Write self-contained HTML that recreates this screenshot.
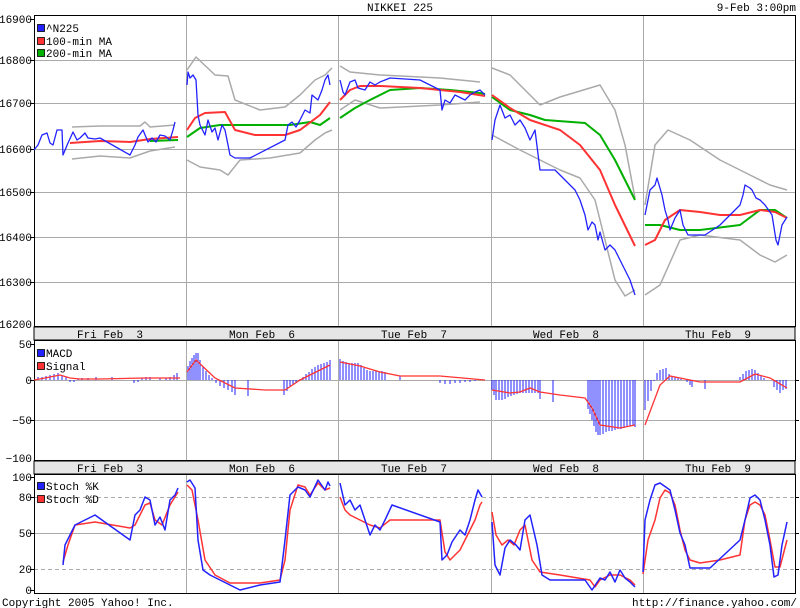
<!DOCTYPE html>
<html><head><meta charset="utf-8"><style>
html,body{margin:0;padding:0;background:#fff;}
svg{display:block;}
text{font-family:"Liberation Mono","DejaVu Sans Mono",monospace;font-size:11px;fill:#000;white-space:pre;}
</style></head><body>
<svg width="800" height="608" viewBox="0 0 800 608" xmlns="http://www.w3.org/2000/svg" xml:space="preserve">
<rect width="800" height="608" fill="#fff"/>
<text x="400" y="11" text-anchor="middle">NIKKEI 225</text>
<text x="796" y="11" text-anchor="end">9-Feb 3:00pm</text>

<g stroke="#aaa" stroke-width="1" fill="none">
<path d="M34 60.5H795M34 103.5H795M34 149.5H795M34 192.5H795M34 237.5H795M34 282.5H795"/>
<path d="M186.5 16V326M338.5 16V326M491.5 16V326M643.5 16V326"/>
<path d="M34 380.5H795M34 420.5H795M186.5 341V460M338.5 341V460M491.5 341V460M643.5 341V460"/>
<path d="M34 533.5H795M186.5 474V593M338.5 474V593M491.5 474V593M643.5 474V593"/>
<path d="M34 497.5H795M34 569.5H795" stroke-dasharray="4,3"/>
</g>
<rect x="34" y="327" width="761" height="13" fill="#e6e6e6" stroke="#000"/>
<rect x="34" y="461" width="761" height="13" fill="#e6e6e6" stroke="#000"/>
<g text-anchor="middle">
<text x="110" y="338">Fri Feb  3</text><text x="262" y="338">Mon Feb  6</text><text x="414" y="338">Tue Feb  7</text><text x="566" y="338">Wed Feb  8</text><text x="718" y="338">Thu Feb  9</text>
<text x="110" y="472">Fri Feb  3</text><text x="262" y="472">Mon Feb  6</text><text x="414" y="472">Tue Feb  7</text><text x="566" y="472">Wed Feb  8</text><text x="718" y="472">Thu Feb  9</text>
</g>
<g fill="none" stroke="#000">
<rect x="34.5" y="15.5" width="761" height="311"/>
<rect x="34.5" y="340.5" width="761" height="120"/>
<rect x="34.5" y="474.5" width="761" height="119"/>
</g>
<g text-anchor="end">
<text x="32" y="23">16900</text><text x="32" y="64">16800</text><text x="32" y="107">16700</text><text x="32" y="153">16600</text><text x="32" y="196">16500</text><text x="32" y="241">16400</text><text x="32" y="286">16300</text><text x="32" y="328">16200</text>
<text x="32" y="348">50</text><text x="32" y="384">0</text><text x="32" y="424">−50</text><text x="32" y="462">−100</text>
<text x="32" y="481">100</text><text x="32" y="501">80</text><text x="32" y="537">50</text><text x="32" y="573">20</text><text x="32" y="594">0</text>
</g>
<g stroke="#000"><path d="M30 19.5h4M30 60.5h4M30 103.5h4M30 149.5h4M30 192.5h4M30 237.5h4M30 282.5h4M30 344.5h4M30 380.5h4M30 420.5h4M30 477.5h4M30 497.5h4M30 533.5h4M30 569.5h4M30 590.5h4M795 380.5h4M795 420.5h4M795 497.5h4M795 533.5h4M795 569.5h4"/></g>

<g fill="none" stroke-width="1.5" stroke-linejoin="round">
<g stroke="#aaa">
<polyline points="72,127 100,126 140,126 145,122 150,127 175,125"/>
<polyline points="72,159 100,156 130,158 150,151 175,147"/>
<polyline points="187,70 196,57 215,75 228,76 235,100 260,110 285,107 300,95 315,80 325,75 332,68"/>
<polyline points="187,160 200,167 220,170 228,175 240,160 270,158 300,153 315,140 325,133 332,130"/>
<polyline points="340,66 350,72 380,75 440,78 480,82"/>
<polyline points="340,110 355,100 380,108 440,105 480,102"/>
<polyline points="492,68 510,75 525,90 540,105 560,97 600,85 615,110 625,145 635,198"/>
<polyline points="492,135 520,150 560,170 580,178 595,200 605,240 615,280 625,296 635,290"/>
<polyline points="645,205 655,145 668,130 690,140 720,160 740,170 770,185 787,190"/>
<polyline points="645,295 660,285 680,240 700,235 740,240 760,255 775,262 787,255"/>
</g>
<g stroke="#00b000" stroke-width="2">
<polyline points="150,141 178,140"/>
<polyline points="187,137 200,128 220,125 290,125 310,122 320,125 330,118"/>
<polyline points="340,118 355,108 370,100 390,90 420,88 450,90 480,93 485,94"/>
<polyline points="492,97 510,110 530,115 545,120 585,123 600,135 615,160 635,200"/>
<polyline points="645,225 660,225 680,230 700,230 740,225 760,210 775,210 787,218"/>
</g>
<g stroke="#f33" stroke-width="2">
<polyline points="70,143 100,141 130,142 150,139 178,137"/>
<polyline points="187,130 195,118 205,113 225,112 235,130 255,135 285,135 300,130 320,115 330,102"/>
<polyline points="340,100 350,90 360,86 380,86 420,88 440,90 460,92 485,96"/>
<polyline points="492,95 510,108 530,120 560,130 580,145 600,170 615,205 635,246"/>
<polyline points="645,245 655,240 665,220 680,210 700,212 720,215 740,215 760,210 775,212 787,218"/>
</g>
<g stroke="#22f" stroke-width="1.3">
<polyline points="34,150 38,145 42,135 47,133 50,143 53,145 57,130 62,130 63,155 68,143 73,132 77,140 80,138 85,133 88,138 95,139 100,138 130,155 135,145 138,137 143,130 148,142 152,138 156,142 160,135 165,136 170,140 173,130 175,122"/>
<polyline points="187,85 188,72 190,78 193,75 196,80 198,115 200,125 205,135 208,120 212,132 215,128 218,140 222,125 225,130 230,155 235,158 250,158 285,140 288,125 292,122 296,127 300,120 305,110 310,113 312,95 318,100 322,90 325,80 328,75 330,85"/>
<polyline points="340,80 343,92 345,95 350,82 355,80 358,88 365,90 370,82 375,85 380,82 385,80 390,78 420,80 440,90 442,110 445,100 450,103 455,95 465,100 470,95 475,92 480,90 485,95"/>
<polyline points="492,140 495,120 500,105 505,118 510,115 515,125 520,120 525,128 530,140 535,130 540,170 555,170 570,185 575,190 580,200 585,215 588,230 592,222 595,225 598,240 600,232 605,250 610,245 615,250 620,260 625,270 630,280 635,295"/>
<polyline points="645,215 648,200 650,190 655,185 657,178 662,195 665,210 668,220 670,230 675,218 680,210 683,225 688,235 705,235 720,225 740,205 743,195 745,185 750,188 752,190 756,198 760,200 765,205 772,215 776,240 778,245 781,230 782,225 787,217"/>
</g>
</g>

<g stroke="#22f" stroke-width="1">
<path d="M38 380V377M42 380V377M46 380V376M50 380V375M54 380V374M58 380V373M62 380V375M66 380V377M70 380V382M74 380V382M78 380V379M82 380V378M88 380V378M96 380V377M112 380V377M134 380V383M138 380V382M142 380V378M146 380V377M150 380V377M160 380V378M166 380V378M170 380V377M174 380V375M177 380V373"/>
<path d="M188 380V366M190 380V361M192 380V358M194 380V355M196 380V353M198 380V353M200 380V360M203 380V366M206 380V371M209 380V375M212 380V378M216 380V383M220 380V386M224 380V388M228 380V390M232 380V392M235 380V395M248 380V396M284 380V395M287 380V391M290 380V387M293 380V385M296 380V383M300 380V379M303 380V377M306 380V374M309 380V372M312 380V369M315 380V367M318 380V365M321 380V364M324 380V363M327 380V362M330 380V360"/>
<path d="M340 380V359M343 380V361M346 380V362M349 380V363M352 380V363M355 380V363M358 380V363M361 380V365M364 380V368M367 380V370M370 380V371M373 380V371M376 380V371M379 380V371M382 380V371M385 380V372M400 380V376M440 380V383M445 380V384M450 380V384M455 380V383M460 380V383M465 380V382M470 380V382M475 380V381M480 380V380"/>
<path d="M492 380V390M494 380V395M496 380V400M499 380V400M502 380V400M505 380V399M508 380V397M511 380V396M514 380V395M517 380V394M520 380V393M523 380V393M526 380V393M529 380V393M532 380V393M535 380V393M538 380V393M540 380V399M553 380V402M588 380V409M590 380V414M592 380V420M594 380V426M596 380V432M598 380V435M600 380V435M603 380V434M606 380V432M609 380V431M612 380V431M615 380V430M618 380V429M621 380V429M624 380V428M627 380V427M630 380V426M633 380V426M635 380V427"/>
<path d="M645 380V410M648 380V401M651 380V391M654 380V381M657 380V373M660 380V370M663 380V369M666 380V368M669 380V374M672 380V376M675 380V377M678 380V378M681 380V379M687 380V382M690 380V385M692 380V387M705 380V389M740 380V377M743 380V374M746 380V371M749 380V370M752 380V369M755 380V370M758 380V373M761 380V376M764 380V378M767 380V380M774 380V387M777 380V390M780 380V393M783 380V390M786 380V389"/>
</g>
<g fill="none" stroke="#f33" stroke-width="1.3">
<polyline points="34,380 45,378 55,376 60,375 70,378 80,379 100,379 145,378 180,378"/>
<polyline points="187,372 196,360 215,378 235,388 265,390 285,390 300,380 330,365"/>
<polyline points="340,362 360,366 380,372 400,376 440,376 485,380"/>
<polyline points="492,390 510,393 520,392 530,388 540,392 560,395 585,398 592,408 600,425 620,428 635,425"/>
<polyline points="645,425 660,385 670,376 690,380 700,382 740,382 755,374 770,378 787,388"/>
</g>

<g fill="none" stroke-width="1.5" stroke-linejoin="round">
<g stroke="#f33">
<polyline points="63,562 68,545 75,525 95,522 130,528 135,525 145,505 150,503 155,520 162,525 170,505 178,492"/>
<polyline points="187,485 192,490 198,520 205,560 215,575 230,583 260,583 280,580 285,560 290,510 298,485 305,487 310,495 318,483 325,490 330,488"/>
<polyline points="340,497 345,510 350,515 360,520 370,525 380,528 390,520 440,520 445,552 450,560 460,550 470,530 475,520 480,505 482,502"/>
<polyline points="492,512 496,535 502,545 508,540 514,545 520,530 525,525 532,560 540,572 560,575 590,580 595,587 600,580 610,575 620,575 630,580 635,585"/>
<polyline points="643,574 648,540 655,520 660,498 665,490 670,493 675,505 680,530 685,550 690,560 700,563 720,560 740,555 745,520 750,505 755,502 760,505 765,515 770,540 775,567 780,567 787,540"/>
</g>
<g stroke="#22f">
<polyline points="63,565 65,545 70,535 75,525 95,515 130,540 135,515 140,510 145,497 150,500 155,525 160,517 165,530 170,500 175,495 178,488"/>
<polyline points="187,482 190,480 195,488 198,540 203,570 210,575 240,590 260,585 280,582 285,540 290,495 298,487 305,490 310,497 318,480 325,490 328,482 330,486"/>
<polyline points="340,483 345,505 350,500 355,510 360,505 370,535 375,525 380,530 385,520 392,505 440,522 442,560 447,555 452,542 460,530 465,535 470,520 475,500 478,490 482,497"/>
<polyline points="492,522 495,565 500,575 505,548 510,540 516,545 520,550 525,520 530,515 537,545 542,575 550,580 585,580 592,590 600,578 605,580 610,572 615,582 620,570 625,578 630,582 635,587"/>
<polyline points="643,572 645,520 650,500 655,485 660,483 670,490 675,510 680,533 685,545 690,568 710,568 740,540 745,520 750,498 755,495 760,500 765,520 770,545 774,577 778,575 782,545 787,522"/>
</g>
</g>

<g stroke="#000" stroke-width="0.8">
<rect x="37.5" y="24.5" width="7" height="7" fill="#22f"/>
<rect x="37.5" y="37.5" width="7" height="7" fill="#f33"/>
<rect x="37.5" y="49.5" width="7" height="7" fill="#00b000"/>
<rect x="37.5" y="349.5" width="7" height="7" fill="#22f"/>
<rect x="37.5" y="362.5" width="7" height="7" fill="#f33"/>
<rect x="37.5" y="482.5" width="7" height="7" fill="#22f"/>
<rect x="37.5" y="495.5" width="7" height="7" fill="#f33"/>
</g>
<text x="46" y="32">^N225</text><text x="46" y="45">100-min MA</text><text x="46" y="57">200-min MA</text>
<text x="46" y="357">MACD</text><text x="46" y="370">Signal</text>
<text x="46" y="490">Stoch %K</text><text x="46" y="503">Stoch %D</text>

<text x="2" y="606">Copyright 2005 Yahoo! Inc.</text>
<text x="797" y="606" text-anchor="end">http://finance.yahoo.com/</text>
</svg>
</body></html>
